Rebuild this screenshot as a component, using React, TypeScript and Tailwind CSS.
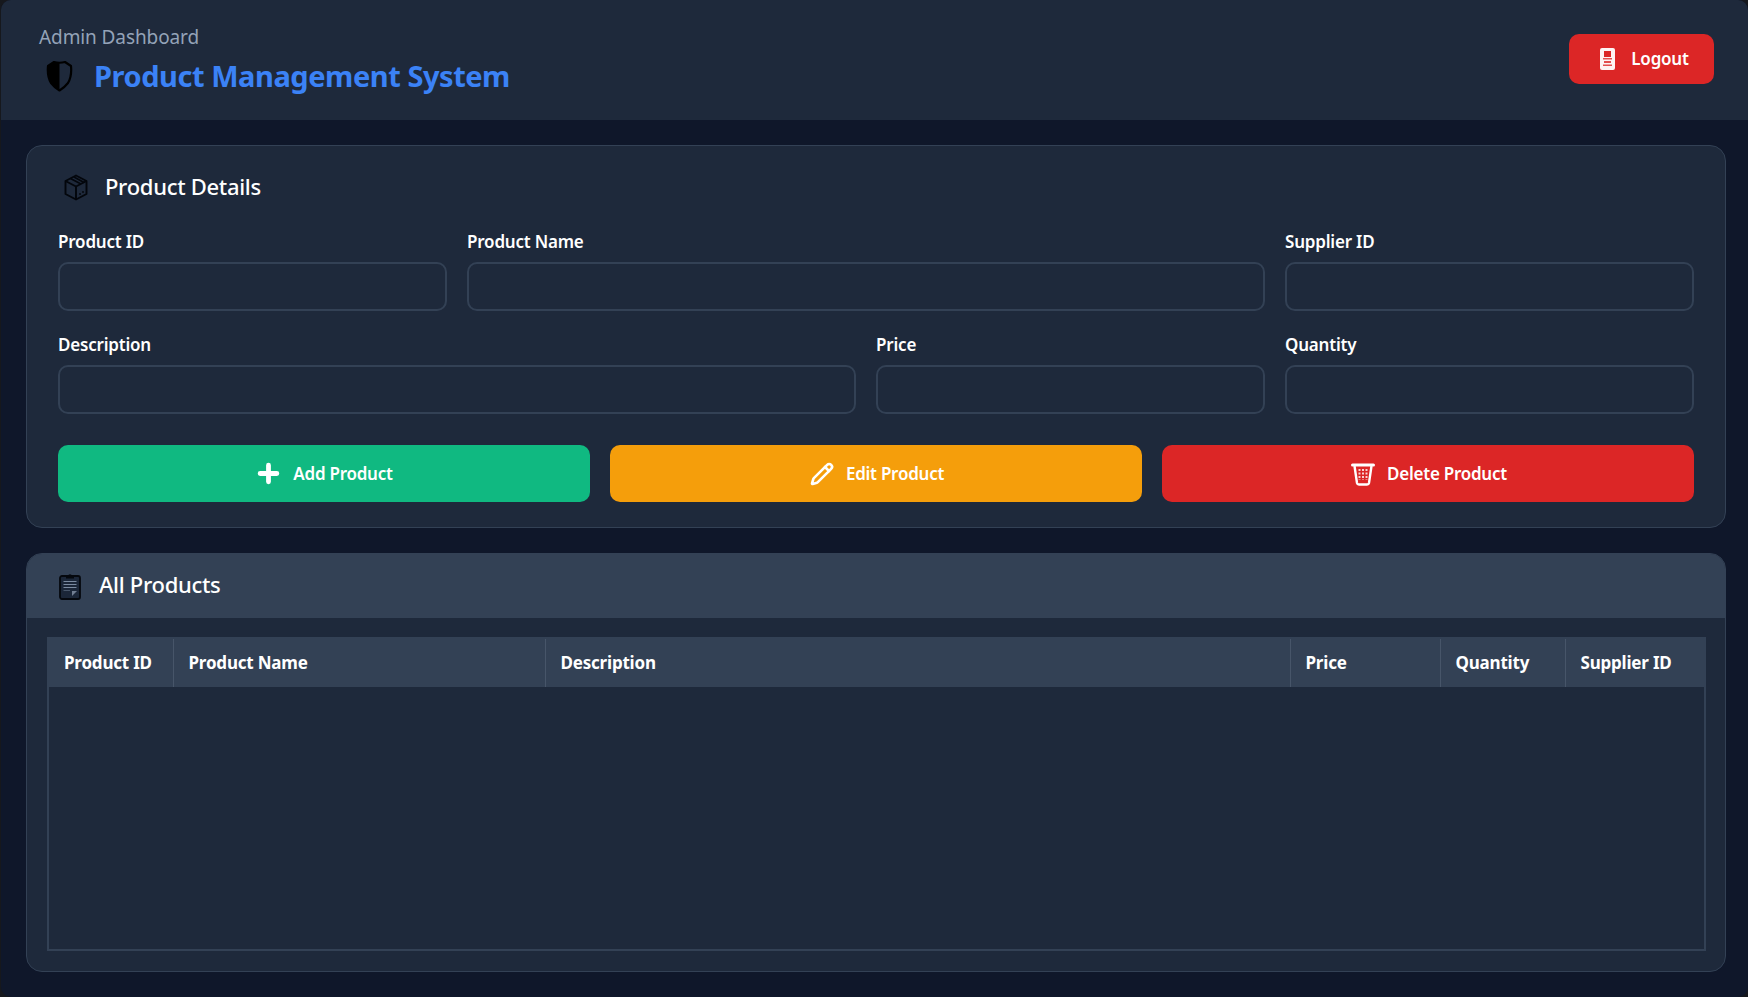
import React from 'react';
import { Pencil } from 'lucide-react';

const fontStack = '[font-family:"Noto_Sans",sans-serif]';

function ShieldIcon() {
  return (
    <svg className="h-[32px] w-[27px] shrink-0" viewBox="0 0 27 32" fill="none">
      <path d="M8 2 Q13.5 3.5 19 2 L25 6 Q26 16 22 23 Q18 28 13.5 30.5 Q9 28 5 23 Q1 16 2 6 Z" stroke="#000" strokeWidth="2.2" strokeLinejoin="round" />
      <path d="M13.5 2.5 Q11 2.5 8 2 L2 6 Q1 16 5 23 Q9 28 13.5 30.5 Z" fill="#000" />
    </svg>
  );
}

function PackageIcon() {
  return (
    <svg className="h-[27px] w-[24px] shrink-0" viewBox="0 0 24 27" fill="none" stroke="#03060c" strokeWidth="1.9" strokeLinejoin="round">
      <path d="M12 1.5 L22.5 7 V20 L12 25.5 L1.5 20 V7 Z" />
      <path d="M1.5 7 L12 12.5 L22.5 7 M12 12.5 V25.5" />
      <path d="M6.5 4.5 L17 10 M10 3 L20 8.5" strokeWidth="1.6" />
      <path d="M16 21 L16 19 M19 19 L19 17" strokeWidth="1.4" />
    </svg>
  );
}

function ClipboardIcon() {
  return (
    <svg className="h-[27px] w-[22px] shrink-0" viewBox="0 0 22 27" fill="none">
      <rect x="1" y="3" width="20" height="23" rx="2" fill="#1b2638" stroke="#05080e" strokeWidth="1.8" />
      <path d="M7 3.5 H9 C9 0.5 13 0.5 13 3.5 H15 V5.5 H7 Z" fill="#05080e" />
      <path d="M4.5 8.5 H17.5 M4.5 11.5 H17.5 M4.5 14.5 H17.5" stroke="#7b8aa0" strokeWidth="1" />
      <path d="M4.5 17.5 H11" stroke="#475569" strokeWidth="1" />
      <path d="M13 23 L18 18 H13 Z" fill="#94a3b8" opacity="0.7" />
    </svg>
  );
}

function LogoutIcon() {
  return (
    <svg className="h-[22px] w-[15px] shrink-0" viewBox="0 0 15 22">
      <rect width="15" height="22" rx="2" fill="#fff" opacity="0.95" />
      <rect x="4" y="3" width="7" height="6" fill="#dc2626" />
      <rect x="3" y="10" width="9" height="1.5" fill="#dc2626" opacity="0.8" />
      <rect x="4" y="13" width="7" height="2" fill="#dc2626" opacity="0.8" />
      <rect x="3" y="16.5" width="9" height="1.5" fill="#dc2626" opacity="0.8" />
    </svg>
  );
}

function PlusIcon() {
  return (
    <svg className="h-[23px] w-[23px] shrink-0" viewBox="0 0 22 22" fill="none" stroke="#fff" strokeWidth="4.6" strokeLinecap="round">
      <path d="M11 3 V19 M3 11 H19" />
    </svg>
  );
}

function TrashIcon() {
  return (
    <svg className="h-[24px] w-[24px] shrink-0" viewBox="0 0 24 24" fill="none" stroke="#fff">
      <path d="M1.5 3 H22.5" strokeWidth="3" strokeLinecap="round" />
      <path d="M3.5 4 L6 21 Q6.3 22.5 8 22.5 H16 Q17.7 22.5 18 21 L20.5 4" strokeWidth="2.4" />
      <path d="M8.5 7 V18 M12 7 V18 M15.5 7 V18" strokeWidth="2" strokeDasharray="2 1.5" opacity="0.8" />
    </svg>
  );
}

function Field({ label, className }: { label: string; className?: string }) {
  return (
    <div className={className}>
      <label className="mb-[8px] block h-[24px] text-[17px] font-semibold leading-[24px] tracking-[-0.2px] text-white">{label}</label>
      <input className="block h-[49px] w-full rounded-[10px] border-2 border-[#334155] bg-[#1e293b] px-4 outline-none" />
    </div>
  );
}

const columns = [
  { name: 'Product ID', width: 'w-[124px]' },
  { name: 'Product Name', width: 'w-[372px]' },
  { name: 'Description', width: 'w-[745px]' },
  { name: 'Price', width: 'w-[150px]' },
  { name: 'Quantity', width: 'w-[125px]' },
  { name: 'Supplier ID', width: '' },
];

export default function App() {
  return (
    <div className={`h-[997px] overflow-hidden bg-[#16181d] pl-px ${fontStack}`}>
      <div className="h-full overflow-hidden rounded-[10px] bg-[#0f172a]">
        {/* Header */}
        <header className="flex h-[120px] items-center justify-between bg-[#1e293b] pl-[38px] pr-[34px]">
          <div>
            <div className="text-[19px] leading-[26px] tracking-[-0.1px] text-[#94a3b8]">Admin Dashboard</div>
            <div className="mt-[6px] flex items-center gap-[21px] pl-[7px]">
              <ShieldIcon />
              <h1 className="text-[29px] font-bold leading-[40px] tracking-[-0.45px] text-[#3b82f6]">Product Management System</h1>
            </div>
          </div>
          <button className="mb-[2px] flex h-[50px] w-[145px] items-center justify-center gap-[16px] rounded-[10px] bg-[#dc2626] pl-[6px] text-[17px] font-semibold tracking-[-0.2px] text-white">
            <LogoutIcon />
            Logout
          </button>
        </header>

        <main className="flex flex-col gap-[25px] pl-[25px] pr-[22px] pt-[25px]">
          {/* Product form */}
          <section className="rounded-[16px] border border-[#334155] bg-[#1e293b] px-[31px] pb-[25px] pt-[25px]">
            <div className="mb-[27px] flex h-[32px] items-center gap-[17px] pl-[6px]">
              <PackageIcon />
              <h2 className="-mt-[2px] text-[22px] font-medium leading-[32px] tracking-[-0.3px] text-white">Product Details</h2>
            </div>
            <div className="grid grid-cols-[1fr_1fr_1fr_409px] gap-x-[20px] gap-y-[22px]">
              <Field label="Product ID" />
              <Field label="Product Name" className="col-span-2" />
              <Field label="Supplier ID" />
              <Field label="Description" className="col-span-2" />
              <Field label="Price" />
              <Field label="Quantity" />
            </div>
            <div className="mt-[31px] grid grid-cols-3 gap-[20px]">
              <button className="flex h-[57px] items-center justify-center gap-[13px] rounded-[10px] bg-[#10b981] pl-[2px] text-[17px] font-semibold tracking-[-0.25px] text-white">
                <PlusIcon />
                Add Product
              </button>
              <button className="flex h-[57px] items-center justify-center gap-[12px] rounded-[10px] bg-[#f59e0b] pl-[2px] text-[17px] font-semibold tracking-[-0.25px] text-white">
                <Pencil className="h-[24px] w-[24px]" strokeWidth={2.6} />
                Edit Product
              </button>
              <button className="flex h-[57px] items-center justify-center gap-[12px] rounded-[10px] bg-[#dc2626] pl-[2px] text-[17px] font-semibold tracking-[-0.25px] text-white">
                <TrashIcon />
                Delete Product
              </button>
            </div>
          </section>

          {/* Products table */}
          <section className="h-[419px] overflow-hidden rounded-[16px] border border-[#334155] bg-[#1e293b]">
            <div className="flex h-[64px] items-center gap-[18px] bg-[#334155] pl-[32px]">
              <ClipboardIcon />
              <h2 className="-mt-[4px] text-[22px] font-medium tracking-[-0.3px] text-white">All Products</h2>
            </div>
            <div className="pl-[20px] pr-[19px] pt-[19px]">
              <div className="h-[314px] border-2 border-[#334155]">
                <table className="w-full table-fixed border-collapse">
                  <thead>
                    <tr className="bg-[#334155]">
                      {columns.map((col) => (
                        <th
                          key={col.name}
                          className={`h-[48px] border-l border-[#475569] px-[15px] text-left text-[17px] font-bold tracking-[-0.2px] text-white first:border-l-0 ${col.width}`}
                        >
                          {col.name}
                        </th>
                      ))}
                    </tr>
                  </thead>
                </table>
              </div>
            </div>
          </section>
        </main>
      </div>
    </div>
  );
}
